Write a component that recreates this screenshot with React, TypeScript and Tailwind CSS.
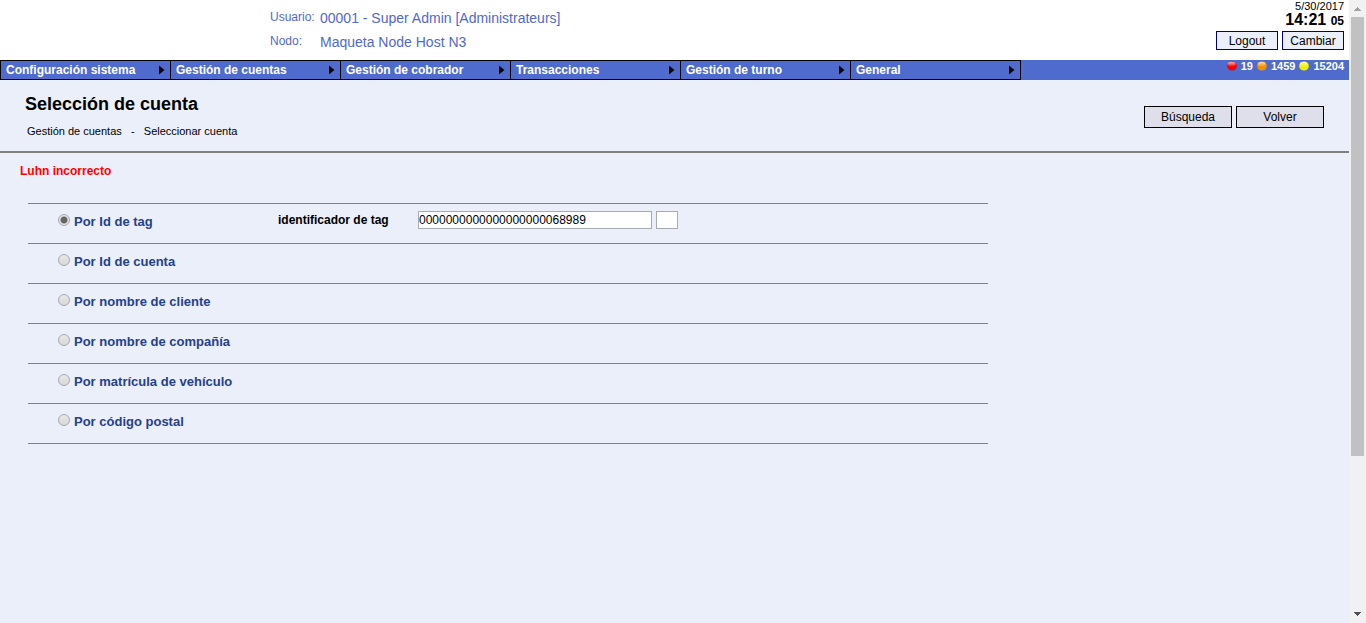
import { useState } from 'react';

const menu = [
  'Configuración sistema',
  'Gestión de cuentas',
  'Gestión de cobrador',
  'Transacciones',
  'Gestión de turno',
  'General',
];

const criteria = [
  'Por Id de tag',
  'Por Id de cuenta',
  'Por nombre de cliente',
  'Por nombre de compañía',
  'Por matrícula de vehículo',
  'Por código postal',
];

const alarms = [
  { id: 'red', color: '#f40000', count: '19' },
  { id: 'orange', color: '#f29100', count: '1459' },
  { id: 'yellow', color: '#eef200', count: '15204' },
];

function Led({ id, color }: { id: string; color: string }) {
  return (
    <svg width="10" height="10" viewBox="0 0 10 10" aria-hidden="true">
      <defs>
        <linearGradient id={id} x1="0" y1="0" x2="0" y2="1">
          <stop offset="0" stopColor="#fff" stopOpacity="0.7" />
          <stop offset="1" stopColor="#fff" stopOpacity="0.1" />
        </linearGradient>
      </defs>
      <ellipse cx="5" cy="5" rx="4.9" ry="4.5" fill={color} />
      <ellipse cx="4.600" cy="3" rx="4" ry="2.300" fill={`url(#${id})`} />
    </svg>
  );
}

function Header() {
  return (
    <header className="flex h-[60px] justify-between bg-white">
      <dl className="ml-[270px] grid grid-cols-[50px_auto] content-start pt-1.5 text-[#5069cb]">
        <dt className="h-6 text-[12px] leading-[22px]">Usuario:</dt>
        <dd className="h-6 text-[14px] leading-6">00001 - Super Admin [Administrateurs]</dd>
        <dt className="h-6 text-[12px] leading-[22px]">Nodo:</dt>
        <dd className="h-6 text-[14px] leading-6">Maqueta Node Host N3</dd>
      </dl>
      <div className="flex flex-col items-end pr-[5px]">
        <span className="text-[11px] leading-3">5/30/2017</span>
        <span className="text-[16px] leading-4 font-bold">
          14:21 <span className="text-[12px]">05</span>
        </span>
        <div className="mt-0.5 flex gap-1">
          <button type="button" className="h-[19px] w-[62px] border border-[#000080] bg-[#eaeffa] text-[12px] leading-4">
            Logout
          </button>
          <button type="button" className="h-[19px] w-[62px] border border-[#000080] bg-[#eaeffa] text-[12px] leading-4">
            Cambiar
          </button>
        </div>
      </div>
    </header>
  );
}

function MenuBar() {
  return (
    <nav className="flex h-5 justify-between bg-[#4f6bcd] text-white">
      <ul className="flex border-l border-black">
        {menu.map((item) => (
          <li key={item} className="w-[170px] border-y border-r border-black">
            <button type="button" className="flex h-[18px] w-full items-center justify-between pr-[5px] pl-[5px] text-[12px] leading-4 font-bold">
              {item}
              <svg width="6" height="10" viewBox="0 0 6 10" aria-hidden="true">
                <path d="M0 0.5v9L5.5 5z" fill="#000" />
              </svg>
            </button>
          </li>
        ))}
      </ul>
      <div className="flex h-3 items-center gap-1 pr-[5px] text-[11px] leading-3 font-bold">
        {alarms.map((a) => (
          <span key={a.id} className="flex items-center gap-1">
            <Led id={a.id} color={a.color} />
            {a.count}
          </span>
        ))}
      </div>
    </nav>
  );
}

function ScrollBar() {
  return (
    <div className="flex w-[17px] shrink-0 flex-col items-center bg-[#f1f1f1]" aria-hidden="true">
      <svg width="17" height="17" viewBox="0 0 17 17" shapeRendering="crispEdges">
        <path d="M5 10h7v1H5zM6 9h5v1H6zM7 8h3v1H7zM8 7h1v1H8z" fill="#a3a3a3" />
      </svg>
      <div className="grid min-h-0 w-full flex-1 grid-rows-[439fr_150fr] px-0.5">
        <div className="bg-[#c1c1c1]" />
      </div>
      <svg width="17" height="17" viewBox="0 0 17 17" shapeRendering="crispEdges">
        <path d="M5 6h7v1H5zM6 7h5v1H6zM7 8h3v1H7zM8 9h1v1H8z" fill="#505050" />
      </svg>
    </div>
  );
}

export default function App() {
  const [selected, setSelected] = useState(0);
  return (
    <div className="flex h-screen bg-[#eaeffa] font-['Liberation_Sans',Arial,sans-serif] text-black">
      <div className="min-w-0 flex-1">
        <Header />
        <MenuBar />
        <div className="flex items-start justify-between border-b-2 border-[#808080] pt-3 pr-[25px] pb-3 pl-[25px]">
          <div>
            <h1 className="text-[18px] leading-6 font-bold">Selección de cuenta</h1>
            <p className="mt-2 pl-0.5 text-[11px] leading-[15px] whitespace-pre">
              Gestión de cuentas{'   -   '}Seleccionar cuenta
            </p>
          </div>
          <div className="flex gap-1 pt-3.5">
            <button type="button" className="h-[22px] w-[88px] border border-black bg-[#dfdeeb] text-[12px] leading-4">
              Búsqueda
            </button>
            <button type="button" className="h-[22px] w-[88px] border border-black bg-[#dfdeeb] text-[12px] leading-4">
              Volver
            </button>
          </div>
        </div>
        <main>
          <p className="pt-2.5 pl-5 text-[12px] leading-4 font-bold text-[#ff0000]">Luhn incorrecto</p>
          <form className="mt-6 ml-7 w-[960px] max-w-full border-t border-[#808080]">
            {criteria.map((label, i) => (
              <div key={label} className="flex h-10 items-start border-b border-[#808080] pl-[30px]">
                <div className="flex w-[220px] items-start pt-2.5">
                  <input
                    type="radio"
                    name="criterio"
                    id={`criterio-${i}`}
                    checked={selected === i}
                    onChange={() => setSelected(i)}
                    className="size-3 shrink-0 appearance-none rounded-full border border-[#a8a8a8] bg-linear-to-b from-[#e9e9e9] to-[#d8d8d8] checked:bg-[radial-gradient(circle,#666_0_3px,#e4e4e4_4px)]"
                  />
                  <label htmlFor={`criterio-${i}`} className="pl-1 text-[13px] leading-4 font-bold text-[#27408b]">
                    {label}
                  </label>
                </div>
                {i === 0 && (
                  <div className="flex items-center gap-1 pt-[7px]">
                    <label htmlFor="tag" className="w-[136px] text-[12px] leading-4 font-bold">
                      identificador de tag
                    </label>
                    <input
                      id="tag"
                      type="text"
                      defaultValue="0000000000000000000068989"
                      className="h-[18px] w-[234px] border border-[#a5acb2] bg-white px-0 text-[12px]"
                    />
                    <input
                      type="text"
                      aria-label="Luhn"
                      className="h-[18px] w-[22px] border border-[#a5acb2] bg-white px-0 text-[12px]"
                    />
                  </div>
                )}
              </div>
            ))}
          </form>
        </main>
      </div>
      <ScrollBar />
    </div>
  );
}
